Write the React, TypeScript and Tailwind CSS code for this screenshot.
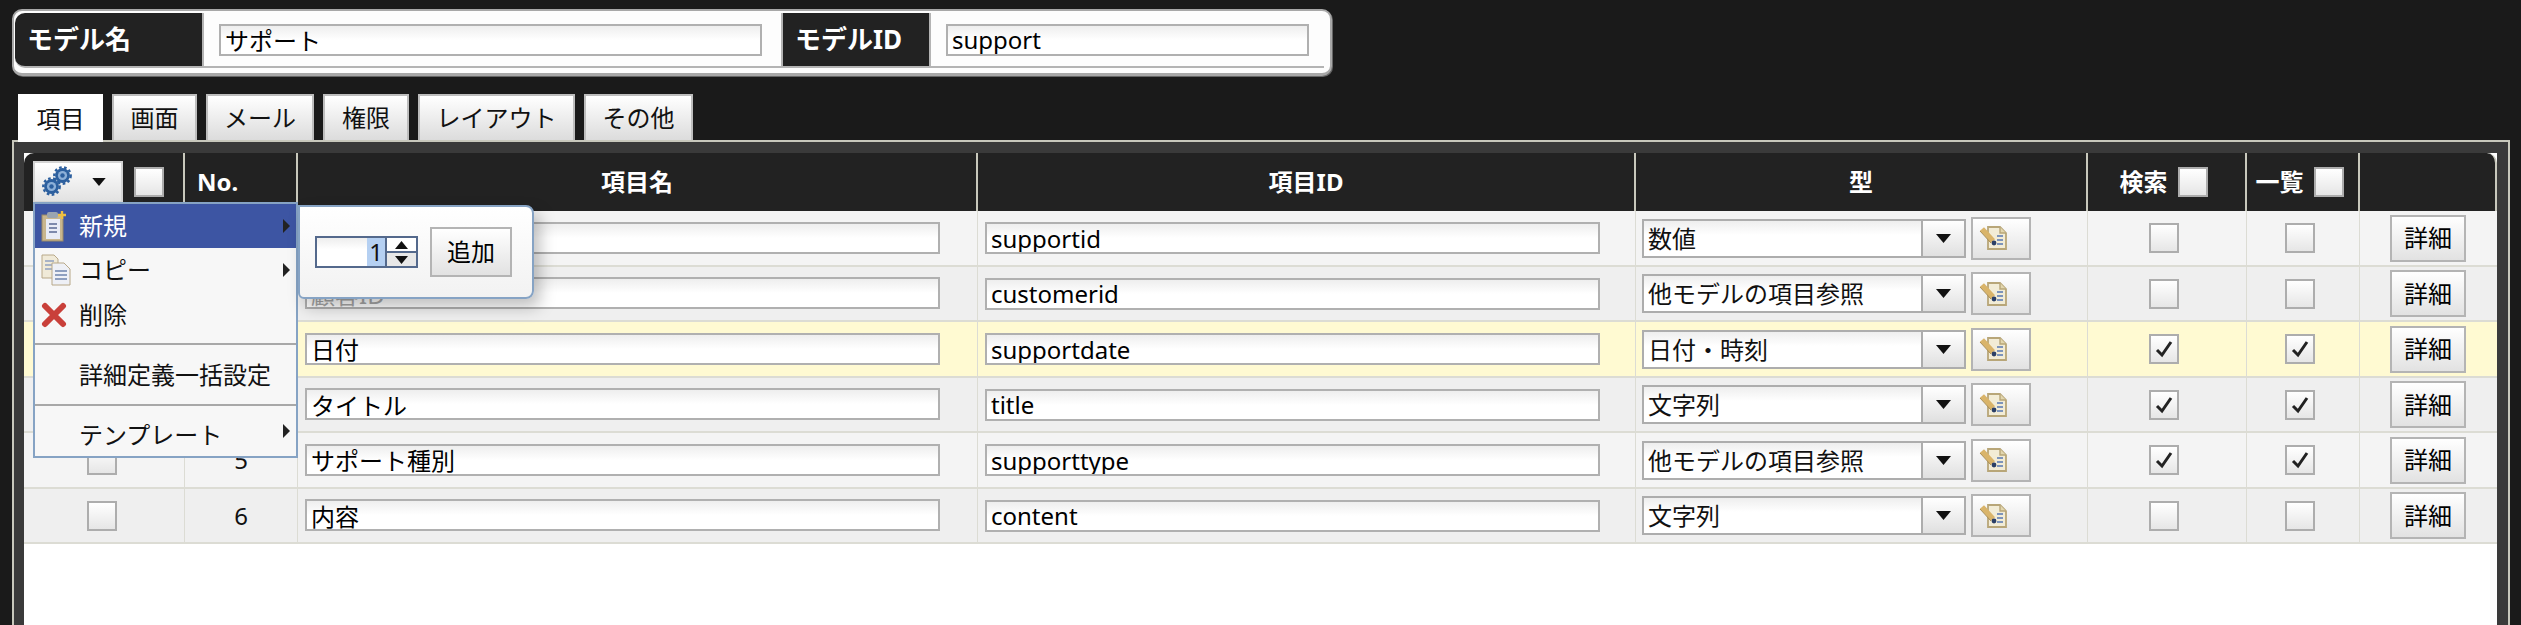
import React from "react";

const Triangle = ({ className }: { className: string }) => (
  <svg viewBox="0 0 10 6" className={className}>
    <path d="M0 0H10L5 6Z" fill="#111" />
  </svg>
);

const SubArrow = () => (
  <svg viewBox="0 0 6 12" className="absolute right-[6px] top-1/2 h-[14px] w-[7px] -translate-y-1/2">
    <path d="M0 0L6 6L0 12Z" fill="#222" />
  </svg>
);

const Gear = ({ cx, cy }: { cx: number; cy: number }) => (
  <g>
    <circle cx={cx} cy={cy} r={8.2} fill="none" stroke="#2c5f9e" strokeWidth="2.4" strokeDasharray="2.6 2.4" />
    <circle cx={cx} cy={cy} r={7.4} fill="#2c5f9e" />
    <circle cx={cx} cy={cy} r={4.6} fill="#8db0d8" />
    <circle cx={cx} cy={cy} r={2.2} fill="#2c5f9e" />
  </g>
);

const GearsIcon = () => (
  <svg viewBox="0 0 30 30" className="h-[30px] w-[30px]">
    <Gear cx={9.5} cy={20.5} />
    <Gear cx={20.5} cy={9.5} />
  </svg>
);

const ClipboardAddIcon = () => (
  <svg viewBox="0 0 26 32" className="h-[32px] w-[26px]">
    <rect x="1" y="5" width="21" height="26" fill="#c8b68e" stroke="#9a8a68" />
    <rect x="5" y="9" width="14" height="20" fill="#e8ecf6" />
    <rect x="6" y="2" width="11" height="6" rx="2" fill="#9aa4b0" />
    <path d="M8 14H16M8 18H16M8 22H16" stroke="#5a6a94" strokeWidth="1.6" />
    <path d="M21 1V9M17 5H25" stroke="#f0c040" strokeWidth="2.4" />
  </svg>
);

const CopyIcon = () => (
  <svg viewBox="0 0 30 32" className="ml-[4px] h-[32px] w-[30px]">
    <path d="M1 1H13L17 5V24H1Z" fill="#f0ead8" stroke="#b8a888" />
    <path d="M4 7H13M4 11H13M4 15H13" stroke="#8fa0c0" strokeWidth="1.4" />
    <path d="M11 9H23L29 15V31H11Z" fill="#eef0f6" stroke="#b8a888" />
    <path d="M14 17H26M14 21H26M14 25H26" stroke="#6f84ad" strokeWidth="1.6" />
  </svg>
);

const DeleteIcon = () => (
  <svg viewBox="0 0 26 26" className="h-[26px] w-[26px]">
    <path d="M4 4L22 22M22 4L4 22" stroke="#c9403a" strokeWidth="6" strokeLinecap="round" />
  </svg>
);

const EditListIcon = () => (
  <svg viewBox="0 0 28 24" className="h-[24px] w-[28px]">
    <path d="M9 1H21L27 7V23H9Z" fill="#f2ecd6" stroke="#b8a678" strokeWidth="1.8" />
    <path d="M21 1V7H27" fill="#e2d6ae" stroke="#b8a678" strokeWidth="1.4" />
    <path d="M18 10H24M18 14H24M18 18H24" stroke="#7d94bb" strokeWidth="2" />
    <path d="M3 3L14 15" stroke="#d9b46a" strokeWidth="5.5" />
    <path d="M1 5L12 17" stroke="#a98e55" strokeWidth="1" />
    <circle cx="15" cy="17" r="2.4" fill="#2b3f66" />
  </svg>
);

const Check = ({ checked = false }: { checked?: boolean }) => (
  <span className="flex h-[30px] w-[30px] items-center justify-center border-2 border-[#adadad] bg-gradient-to-b from-white to-[#e6e6e6]">
    {checked && (
      <svg viewBox="0 0 20 20" className="h-[20px] w-[20px]">
        <path d="M3 11L8 16L17 3" fill="none" stroke="#222" strokeWidth="3" />
      </svg>
    )}
  </span>
);

const TextInput = ({ value, className, muted = false }: { value: string; className: string; muted?: boolean }) => (
  <input
    readOnly
    value={value}
    className={`h-[32px] border-2 border-[#b0b0b0] bg-gradient-to-b from-[#eeeeee] from-0% to-white to-50% px-[4px] text-[24px] leading-none outline-none ${
      muted ? "text-[#a8a8a8]" : "text-black"
    } ${className}`}
  />
);

const Button = ({ children, className }: { children: React.ReactNode; className: string }) => (
  <button className={`flex items-center justify-center border-2 border-[#b4b4b4] bg-gradient-to-b from-white to-[#e2e2e2] text-[24px] text-black ${className}`}>
    {children}
  </button>
);

const Tab = ({ label, active = false, className }: { label: string; active?: boolean; className: string }) => (
  <div
    className={`flex h-[46px] items-center justify-center border-x-2 border-t-2 border-[#bdbdbd] text-[24px] text-[#111] ${
      active ? "relative z-10 h-[48px] -mb-[2px] border-white bg-white" : "bg-gradient-to-b from-white to-[#dcdcdc]"
    } ${className}`}
  >
    {label}
  </div>
);

const rows = [
  { no: 1, name: "サポートID", id: "supportid", type: "数値", search: false, list: false, bg: "bg-[#f4f4f4]" },
  { no: 2, name: "顧客ID", id: "customerid", type: "他モデルの項目参照", search: false, list: false, bg: "bg-[#efefef]" },
  { no: 3, name: "日付", id: "supportdate", type: "日付・時刻", search: true, list: true, bg: "bg-[#fffad2]" },
  { no: 4, name: "タイトル", id: "title", type: "文字列", search: true, list: true, bg: "bg-[#efefef]" },
  { no: 5, name: "サポート種別", id: "supporttype", type: "他モデルの項目参照", search: true, list: true, bg: "bg-[#f4f4f4]" },
  { no: 6, name: "内容", id: "content", type: "文字列", search: false, list: false, bg: "bg-[#efefef]" },
];

const rowHeights = ["h-[56px]", "h-[55px]", "h-[56px]", "h-[55px]", "h-[56px]", "h-[55px]"];

const thClass = "border-r-2 border-[#c8c8bc] p-0 text-center text-[24px] font-bold text-white";
const tdClass = "border-r border-b-2 border-[#dcdcd4] p-0 align-middle";

const MenuItem = ({
  icon,
  label,
  arrow = false,
  active = false,
  className,
}: {
  icon?: React.ReactNode;
  label: string;
  arrow?: boolean;
  active?: boolean;
  className: string;
}) => (
  <div className={`relative flex items-center text-[24px] ${active ? "bg-[#3d55a3] text-white" : "text-[#111]"} ${className}`}>
    <span className="flex w-[44px] shrink-0 items-center justify-center pr-[6px]">{icon}</span>
    <span>{label}</span>
    {arrow && <SubArrow />}
  </div>
);

export default function App() {
  return (
    <div className="h-[625px] overflow-hidden bg-[#1a1a1a] pt-[9px] font-['Noto_Sans','Noto_Sans_CJK_JP',sans-serif]">
      <div className="ml-[12px] flex h-[67px] w-[1320px] rounded-[10px] border-x-2 border-t-2 border-b-[3px] border-[#a8a8a8] bg-[#fdfdfd] pl-[1px] pr-[6px] pt-[2px] shadow-[1px_1px_0_#666]">
        <div className="flex h-[55px] w-[189px] items-center rounded-l-[10px] border-r-2 border-b-2 border-[#b4b4b4] bg-[#222] pl-[12px] text-[26px] font-bold text-white">
          モデル名
        </div>
        <div className="flex h-[55px] w-[579px] items-center border-r-2 border-b-2 border-[#b4b4b4] pl-[15px]">
          <TextInput value="サポート" className="w-[543px]" />
        </div>
        <div className="flex h-[55px] w-[148px] items-center border-r-2 border-b-2 border-[#b4b4b4] bg-[#222] pl-[12px] text-[26px] font-bold text-white">
          モデルID
        </div>
        <div className="flex h-[55px] flex-1 items-center border-b-2 border-[#b4b4b4] pl-[15px]">
          <TextInput value="support" className="w-[363px]" />
        </div>
      </div>

      <div className="ml-[18px] mt-[18px] flex h-[46px] items-end gap-[9px]">
        <Tab label="項目" active className="w-[85px]" />
        <Tab label="画面" className="w-[85px]" />
        <Tab label="メール" className="w-[108px]" />
        <Tab label="権限" className="w-[86px]" />
        <Tab label="レイアウト" className="w-[157px]" />
        <Tab label="その他" className="w-[109px]" />
      </div>

      <div className="ml-[12px] h-[485px] w-[2498px] border-x-2 border-t-2 border-[#c8c8bc] bg-[#3a3a3a] pl-[10px] pr-[11px] pt-[11px]">
        <div className="relative h-full bg-white">
          <table className="w-[2473px] table-fixed border-separate border-spacing-0">
            <colgroup>
              <col className="w-[161px]" />
              <col className="w-[113px]" />
              <col className="w-[680px]" />
              <col className="w-[658px]" />
              <col className="w-[452px]" />
              <col className="w-[159px]" />
              <col className="w-[113px]" />
              <col className="w-[137px]" />
            </colgroup>
            <thead>
              <tr className="h-[58px]">
                <th className={`${thClass} rounded-tl-[10px] bg-[#222]`}>
                  <div className="flex items-center pl-[9px]">
                    <span className="flex h-[42px] w-[90px] items-start border-2 border-[#d4d4d4] bg-gradient-to-b from-white to-[#e2e2e2]">
                      <span className="ml-[7px] mt-[3px]"><GearsIcon /></span>
                      <Triangle className="ml-[20px] mt-[15px] h-[8px] w-[14px]" />
                    </span>
                    <span className="ml-[11px]"><Check /></span>
                  </div>
                </th>
                <th className={`${thClass} bg-[#222] pl-[12px] text-left`}>No.</th>
                <th className={`${thClass} bg-[#222]`}>項目名</th>
                <th className={`${thClass} bg-[#222]`}>項目ID</th>
                <th className={`${thClass} bg-[#222]`}>型</th>
                <th className={`${thClass} bg-[#222]`}>
                  <span className="flex items-center justify-center gap-[10px] pr-[6px]">検索<Check /></span>
                </th>
                <th className={`${thClass} bg-[#222]`}>
                  <span className="flex items-center justify-center gap-[10px] pr-[6px]">一覧<Check /></span>
                </th>
                <th className={`${thClass} rounded-tr-[10px] border-r-0 bg-[#222]`} />
              </tr>
            </thead>
            <tbody>
              {rows.map((row, i) => (
                <tr key={row.no} className={`${rowHeights[i]} ${row.bg}`}>
                  <td className={tdClass}>
                    <div className="flex justify-center pr-[5px]"><Check /></div>
                  </td>
                  <td className={`${tdClass} text-center text-[24px] text-[#111]`}>{row.no}</td>
                  <td className={tdClass}>
                    <div className="pl-[7px]"><TextInput value={row.name} muted={row.no === 2} className="w-[635px]" /></div>
                  </td>
                  <td className={tdClass}>
                    <div className="pl-[7px]"><TextInput value={row.id} className="w-[615px]" /></div>
                  </td>
                  <td className={tdClass}>
                    <div className="flex items-center gap-[5px] pl-[6px]">
                      <div className="flex h-[39px] w-[324px] border-2 border-[#adadad] bg-white text-[24px] text-[#111]">
                        <span className="flex-1 bg-gradient-to-b from-[#eeeeee] to-white to-40% pl-[4px] leading-[35px]">{row.type}</span>
                        <span className="flex w-[43px] items-center justify-center border-l-2 border-[#adadad] bg-gradient-to-b from-white to-[#e0e0e0]">
                          <Triangle className="h-[9px] w-[15px]" />
                        </span>
                      </div>
                      <Button className="h-[43px] w-[60px] !justify-start pl-[6px]"><EditListIcon /></Button>
                    </div>
                  </td>
                  <td className={tdClass}>
                    <div className="flex justify-center pr-[7px]"><Check checked={row.search} /></div>
                  </td>
                  <td className={tdClass}>
                    <div className="flex justify-center pr-[7px]"><Check checked={row.list} /></div>
                  </td>
                  <td className={`${tdClass} border-r-0`}>
                    <div className="flex justify-center pr-[1px]"><Button className="h-[47px] w-[76px]">詳細</Button></div>
                  </td>
                </tr>
              ))}
            </tbody>
          </table>

          <div className="absolute left-[9px] top-[49px] z-20 h-[256px] w-[265px] border-2 border-[#86a3c4] bg-[#f7f7f7]">
            <MenuItem active icon={<ClipboardAddIcon />} label="新規" arrow className="h-[44px]" />
            <MenuItem icon={<CopyIcon />} label="コピー" arrow className="h-[44px]" />
            <MenuItem icon={<DeleteIcon />} label="削除" className="mb-[5px] h-[46px]" />
            <div className="h-[2px] bg-[#a8a8a8]" />
            <MenuItem label="詳細定義一括設定" className="h-[59px]" />
            <div className="h-[2px] bg-[#a8a8a8]" />
            <MenuItem label="テンプレート" arrow className="h-[50px] pt-[7px]" />
          </div>

          <div className="absolute left-[274px] top-[52px] z-30 flex h-[94px] w-[236px] items-center rounded-r-[8px] rounded-bl-[6px] border-2 border-[#86a3c4] bg-gradient-to-b from-white to-[#f2f2f2] pl-[15px] shadow-[6px_8px_16px_rgba(0,0,0,0.25)]">
            <div className="flex h-[32px] w-[103px] border-2 border-[#54698c] bg-white">
              <span className="flex-1 bg-gradient-to-b from-[#eeeeee] to-white to-40%" />
              <span className="flex w-[18px] items-center justify-center bg-[#b5d0f2] text-[24px] leading-none text-[#111]">1</span>
              <span className="flex w-[31px] flex-col border-l-2 border-[#54698c]">
                <span className="flex flex-1 items-center justify-center bg-white">
                  <Triangle className="h-[8px] w-[13px] rotate-180" />
                </span>
                <span className="flex flex-1 items-center justify-center border-t-2 border-[#54698c] bg-[#e8e8e8]">
                  <Triangle className="h-[8px] w-[13px]" />
                </span>
              </span>
            </div>
            <Button className="ml-[12px] h-[50px] w-[82px]">追加</Button>
          </div>
        </div>
      </div>
    </div>
  );
}
